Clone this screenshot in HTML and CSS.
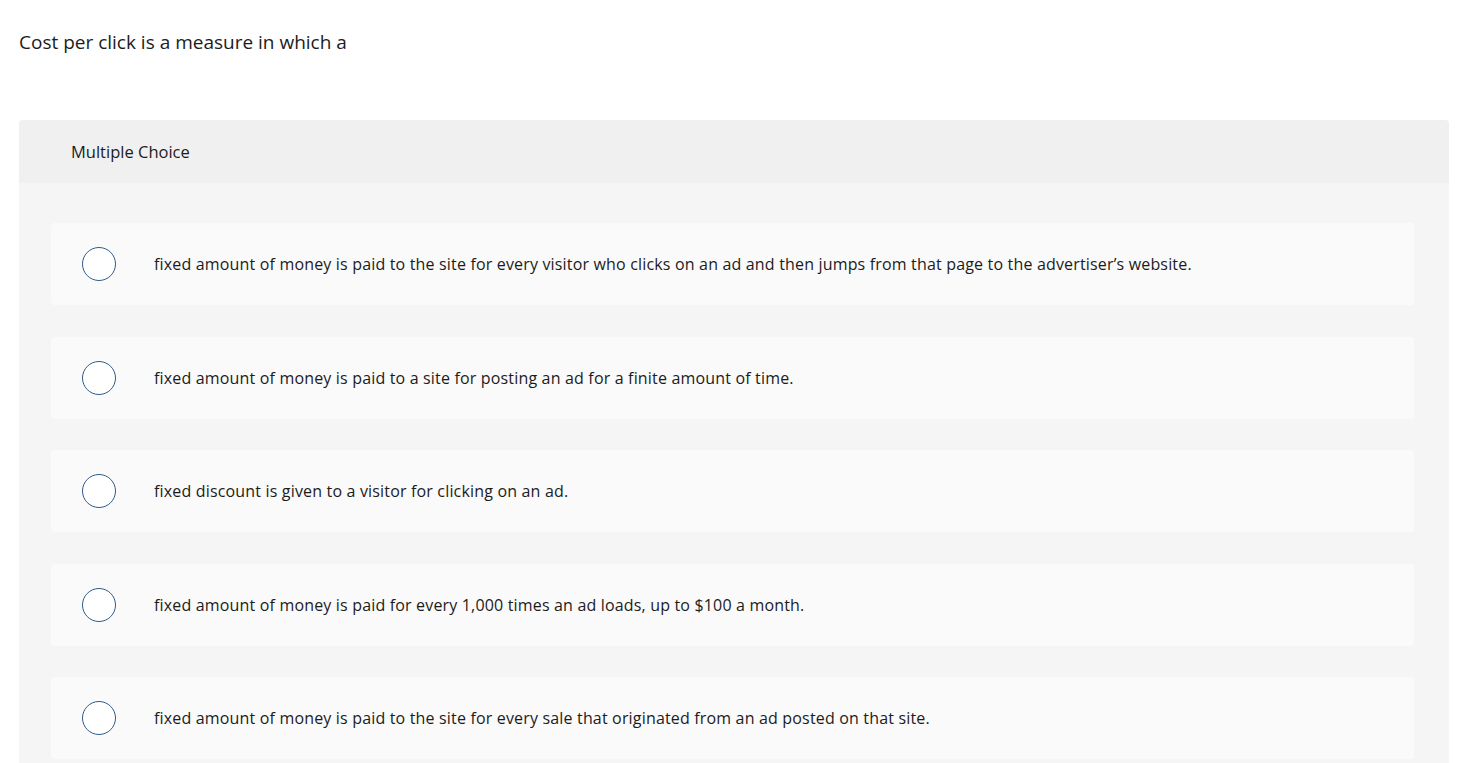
FILE: index.html
```html
<!DOCTYPE html>
<html>
<head>
<meta charset="utf-8">
<link rel="stylesheet" href="styles.css">
</head>
<body>
<div class="page">
  <p class="question">Cost per click is a measure in which a</p>
  <div class="panel">
    <div class="panel-head">Multiple Choice</div>
    <div class="panel-body">
      <div class="option"><span class="radio"></span><span class="label">fixed amount of money is paid to the site for every visitor who clicks on an ad and then jumps from that page to the advertiser’s website.</span></div>
      <div class="option"><span class="radio"></span><span class="label">fixed amount of money is paid to a site for posting an ad for a finite amount of time.</span></div>
      <div class="option"><span class="radio"></span><span class="label">fixed discount is given to a visitor for clicking on an ad.</span></div>
      <div class="option"><span class="radio"></span><span class="label">fixed amount of money is paid for every 1,000 times an ad loads, up to $100 a month.</span></div>
      <div class="option"><span class="radio"></span><span class="label">fixed amount of money is paid to the site for every sale that originated from an ad posted on that site.</span></div>
    </div>
  </div>
</div>
</body>
</html>
```
FILE: styles.css
```css
html, body {
  margin: 0;
  padding: 0;
  background: #ffffff;
}
body {
  font-family: "Open Sans", "Lato", sans-serif;
  color: #1c1c1c;
  font-variant-ligatures: none;
}
.page {
  padding: 0 12px 0 19px;
}
.question {
  margin: 0;
  padding-top: 29px;
  height: 120px;
  box-sizing: border-box;
  font-size: 19px;
  line-height: 26px;
}
.panel {
  background: #f5f5f5;
  border-radius: 4px 4px 0 0;
}
.panel-head {
  height: 63px;
  background: #f0f0f0;
  border-radius: 4px 4px 0 0;
  display: flex;
  align-items: center;
  padding-left: 52px;
  font-size: 16.5px;
}
.panel-body {
  padding: 40px 35px 20px 32px;
  display: flex;
  flex-direction: column;
  gap: 31.5px;
}
.option {
  height: 82px;
  background: #fafafa;
  border-radius: 4px;
  display: flex;
  align-items: center;
  padding-left: 31px;
}
.radio {
  width: 32px;
  height: 32px;
  border: 1.5px solid #2f5b8c;
  border-radius: 50%;
  background: #ffffff;
  flex: none;
}
.label {
  margin-left: 38px;
  font-size: 16px;
  letter-spacing: 0.17px;
}
```
